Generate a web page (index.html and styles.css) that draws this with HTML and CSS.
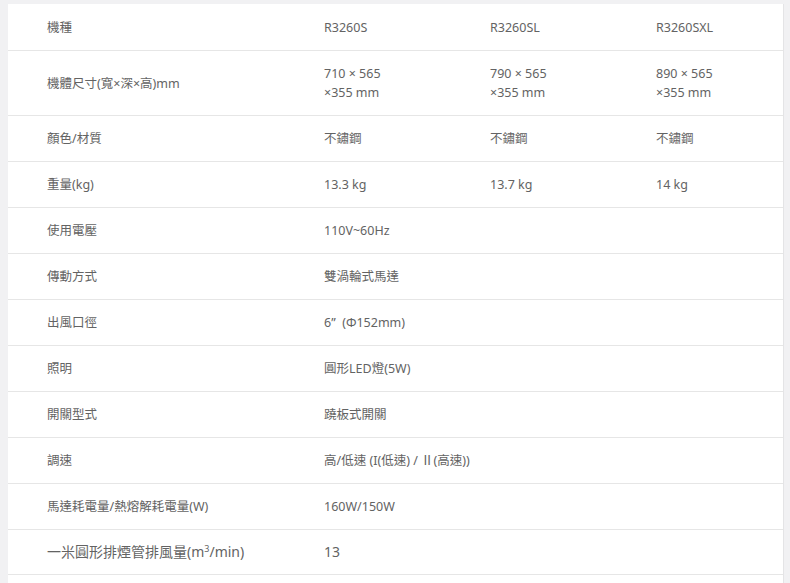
FILE: index.html
```html
<!DOCTYPE html>
<html lang="zh-Hant">
<head>
<meta charset="utf-8">
<title>規格</title>
<link rel="stylesheet" href="styles.css">
</head>
<body>
<div class="card">
<table class="spec">
  <colgroup><col class="c-label"><col class="c-val"><col class="c-val"><col class="c-val"></colgroup>
  <tr class="head"><td>機種</td><td>R3260S</td><td>R3260SL</td><td>R3260SXL</td></tr>
  <tr><td>機體尺寸(寬×深×高)mm</td><td>710 × 565 ×355 mm</td><td>790 × 565 ×355 mm</td><td>890 × 565 ×355 mm</td></tr>
  <tr><td>顏色/材質</td><td>不鏽鋼</td><td>不鏽鋼</td><td>不鏽鋼</td></tr>
  <tr><td>重量(kg)</td><td>13.3 kg</td><td>13.7 kg</td><td>14 kg</td></tr>
  <tr><td>使用電壓</td><td colspan="3">110V~60Hz</td></tr>
  <tr><td>傳動方式</td><td colspan="3">雙渦輪式馬達</td></tr>
  <tr><td>出風口徑</td><td colspan="3">6”&nbsp; (Φ152mm)</td></tr>
  <tr><td>照明</td><td colspan="3">圓形LED燈(5W)</td></tr>
  <tr><td>開關型式</td><td colspan="3">蹺板式開關</td></tr>
  <tr><td>調速</td><td colspan="3">高/低速 (I(低速) / Ⅱ(高速))</td></tr>
  <tr><td>馬達耗電量/熱熔解耗電量(W)</td><td colspan="3">160W/150W</td></tr>
  <tr class="big"><td>一米圓形排煙管排風量(m<sup>3</sup>/min)</td><td colspan="3">13</td></tr>
</table>
</div>
</body>
</html>
```
FILE: styles.css
```css
html, body {
  margin: 0;
  padding: 0;
  background: #f1f1f3;
}
.card {
  margin: 4px 0 0 8px;
  width: 775px;
  height: 579px;
  background: #fff;
  border-right: 1px solid #e4e4e6;
  overflow: hidden;
}
.spec {
  width: 775px;
  border-collapse: collapse;
  table-layout: fixed;
  font-family: "Noto Sans", "Noto Sans CJK TC", sans-serif;
  font-size: 12.5px;
  color: #636363;
}
.c-label { width: 277px; }
.c-val { width: 166px; }
.spec td {
  padding: 13px 39px;
  line-height: 19px;
  border-bottom: 1px solid #e6e6e6;
  vertical-align: middle;
  text-align: left;
}
.spec .head td {
  padding-top: 14px;
}
.spec .big td {
  font-size: 14px;
  padding: 12px 39px;
  line-height: 20px;
}
.spec sup {
  font-size: 9px;
  line-height: 0;
  vertical-align: 5px;
}
```
